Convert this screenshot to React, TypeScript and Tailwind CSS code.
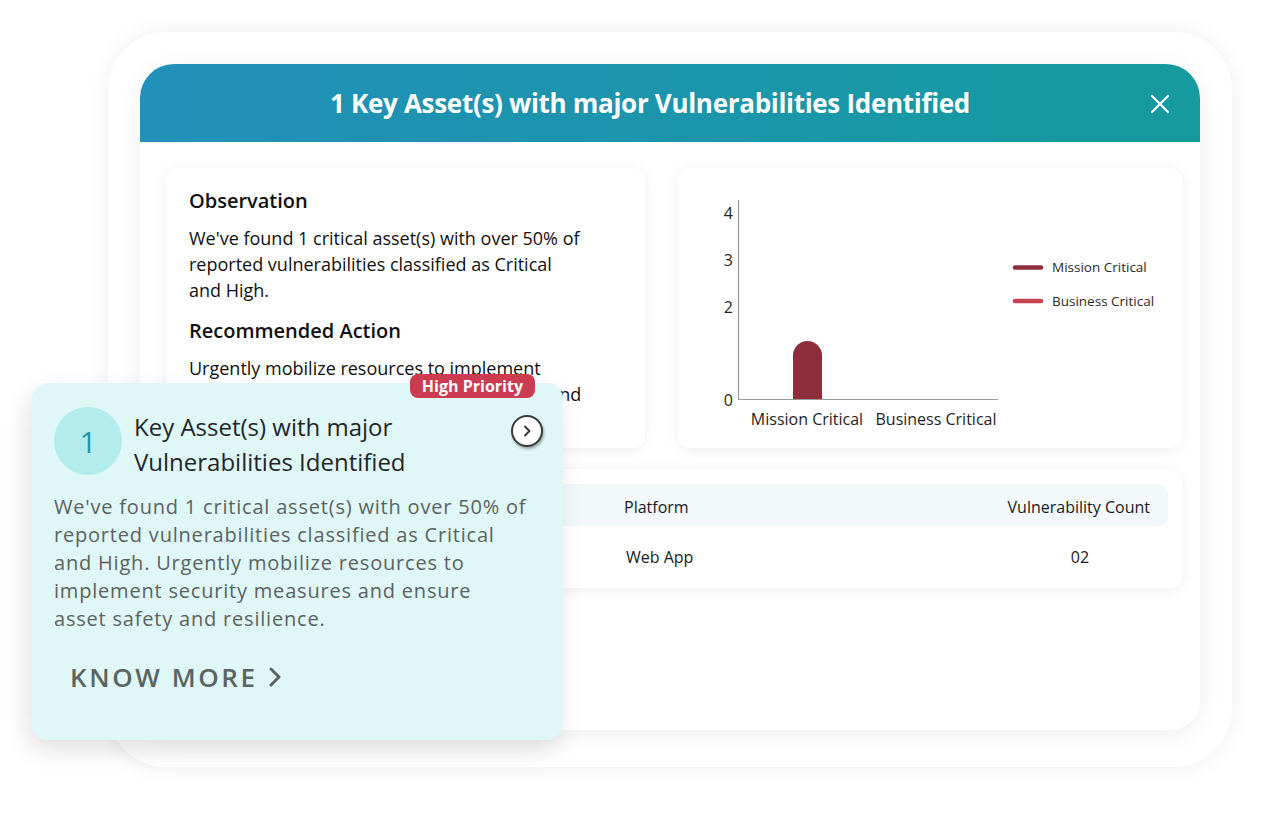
import React from "react";

const font = { fontFamily: '"Open Sans", "Noto Sans", sans-serif' };

function Chart() {
  return (
    <svg width="504" height="280" viewBox="0 0 504 280" className="block">
      <g fontFamily='"Open Sans", sans-serif' fontSize="16" fill="#1f1f1f">
        <text x="55" y="51" textAnchor="end">4</text>
        <text x="55" y="98" textAnchor="end">3</text>
        <text x="55" y="145" textAnchor="end">2</text>
        <text x="55" y="238" textAnchor="end">0</text>
        <text x="129" y="257" textAnchor="middle">Mission Critical</text>
        <text x="258" y="257" textAnchor="middle">Business Critical</text>
      </g>
      <line x1="60.5" y1="32" x2="60.5" y2="231" stroke="#9a9a9a" strokeWidth="1.2" />
      <line x1="60" y1="231.5" x2="320" y2="231.5" stroke="#9a9a9a" strokeWidth="1.2" />
      <path d="M115 231 V187.5 A14.5 14.5 0 0 1 144 187.5 V231 Z" fill="#8e2d3b" />
      <line x1="337" y1="99.5" x2="363" y2="99.5" stroke="#8e2d3b" strokeWidth="4.5" strokeLinecap="round" />
      <line x1="337" y1="133" x2="363" y2="133" stroke="#c74457" strokeWidth="4.5" strokeLinecap="round" />
      <g fontFamily='"Open Sans", sans-serif' fontSize="13.5" fill="#2a2a2a">
        <text x="374" y="104">Mission Critical</text>
        <text x="374" y="138">Business Critical</text>
      </g>
    </svg>
  );
}

export default function App() {
  return (
    <div className="relative w-[1278px] h-[814px] overflow-hidden bg-white" style={font}>
      <div className="pt-[32px] pl-[108px]">
        {/* outer frame */}
        <div className="w-[1124px] h-[735px] rounded-[58px] bg-white p-[32px] shadow-[0_0_22px_rgba(0,0,0,0.07)]">
          {/* inner panel */}
          <div className="w-[1060px] h-[666px] rounded-t-[34px] rounded-b-[30px] bg-white shadow-[0_4px_24px_rgba(0,0,0,0.07)] flex flex-col">
            <div className="h-[78px] shrink-0 rounded-t-[34px] bg-gradient-to-r from-[#2290b9] to-[#159a9e] flex items-center relative">
              <div className="flex-1 text-center text-white text-[26px] font-bold tracking-[-0.3px] pr-[40px]">
                1 Key Asset(s) with major Vulnerabilities Identified
              </div>
              <svg className="absolute right-[30px] top-[30px]" width="20" height="20" viewBox="0 0 20 20">
                <path d="M2 2 L18 18 M18 2 L2 18" stroke="white" strokeWidth="2.2" strokeLinecap="round" />
              </svg>
            </div>
            <div className="pt-[26px] pl-[26px] pr-[18px] flex flex-col gap-[21px]">
              <div className="flex gap-[33px]">
                <div className="w-[479px] h-[280px] rounded-[12px] bg-white shadow-[0_2px_14px_rgba(0,0,0,0.07)] pl-[23px] pt-[20px] text-[#111]">
                  <div className="text-[20px] font-semibold leading-[26px]">Observation</div>
                  <p className="mt-[11px] text-[18px] leading-[26px] w-[430px]">
                    We've found 1 critical asset(s) with over 50% of<br />
                    reported vulnerabilities classified as Critical<br />
                    and High.
                  </p>
                  <div className="mt-[15px] text-[20px] font-semibold leading-[26px]">Recommended Action</div>
                  <p className="mt-[11px] text-[18px] leading-[26px] w-[430px]">
                    Urgently mobilize resources to implement<br />
                    security measures and ensure asset safety and<br />
                    resilience.
                  </p>
                </div>
                <div className="w-[504px] h-[280px] rounded-[12px] bg-white shadow-[0_2px_14px_rgba(0,0,0,0.07)]">
                  <Chart />
                </div>
              </div>
              <div className="w-[1016px] h-[119px] rounded-[12px] bg-white shadow-[0_2px_14px_rgba(0,0,0,0.07)] px-[14px] pt-[15px] text-[16px] text-[#1a1a1a]">
                <div className="h-[42px] pt-[3px] rounded-[10px] bg-[#f3f8fa] grid grid-cols-[424px_1fr_170px] items-center pl-[20px] pr-[18px]">
                  <div>Asset Name</div>
                  <div>Platform</div>
                  <div className="text-right">Vulnerability Count</div>
                </div>
                <div className="h-[62px] grid grid-cols-[424px_1fr_170px] items-center pl-[20px] pr-[18px]">
                  <div>Customer Portal</div>
                  <div className="pl-[2px]">Web App</div>
                  <div className="text-center pl-[30px]">02</div>
                </div>
              </div>
            </div>
          </div>
        </div>
      </div>

      {/* overlay card */}
      <div className="absolute left-[32px] top-[383px] w-[531px] h-[357px] rounded-[16px] bg-[#e0f7f7] shadow-[-4px_10px_24px_rgba(0,0,0,0.12)] pl-[22px] pr-[20px] pt-[24px]">
        <div className="absolute right-[28px] top-[-9px] h-[24px] px-[12px] rounded-[8px] bg-[#cd3b51] text-white text-[16px] font-bold leading-[24px]">
          High Priority
        </div>
        <div className="flex items-start">
          <div className="w-[68px] h-[68px] shrink-0 rounded-full bg-[#b3ecec] flex items-center justify-center text-[30px] font-normal text-[#1b97a8]">
            1
          </div>
          <div className="ml-[12px] mt-[2px] text-[24px] font-medium leading-[35px] text-[#1f2626] flex-1">
            Key Asset(s) with major<br />Vulnerabilities Identified
          </div>
          <div className="mt-[8px] w-[32px] h-[32px] rounded-full bg-white border-2 border-[#3a3a3a] shadow-[1px_2px_3px_rgba(0,0,0,0.35)] flex items-center justify-center">
            <svg width="14" height="14" viewBox="0 0 14 14">
              <path d="M5 2.5 L9.5 7 L5 11.5" stroke="#333" strokeWidth="1.8" fill="none" strokeLinecap="round" strokeLinejoin="round" />
            </svg>
          </div>
        </div>
        <p className="mt-[14px] text-[20px] font-medium leading-[28px] tracking-[0.8px] text-[#5a6262] w-[489px] whitespace-nowrap">
          We've found 1 critical asset(s) with over 50% of<br />
          reported vulnerabilities classified as Critical<br />
          and High. Urgently mobilize resources to<br />
          implement security measures and ensure<br />
          asset safety and resilience.
        </p>
        <div className="mt-[28px] ml-[16px] flex items-center gap-[10px] text-[26px] font-semibold tracking-[2.6px] text-[#5b6363] leading-[32px]">
          KNOW MORE
          <svg width="14" height="22" viewBox="0 0 14 22">
            <path d="M3 3 L11 11 L3 19" stroke="#5b6363" strokeWidth="3" fill="none" strokeLinecap="round" strokeLinejoin="round" />
          </svg>
        </div>
      </div>
    </div>
  );
}
